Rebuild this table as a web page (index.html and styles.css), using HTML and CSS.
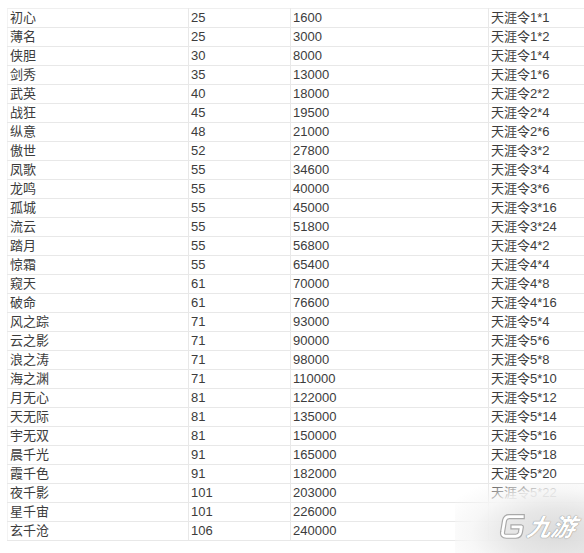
FILE: index.html
```html
<!DOCTYPE html>
<html>
<head>
<meta charset="utf-8">
<link rel="stylesheet" href="styles.css">
</head>
<body>
<div class="page">
<table class="grid">
<colgroup><col class="c1"><col class="c2"><col class="c3"><col class="c4"></colgroup>
<tbody>
<tr><td>初心</td><td>25</td><td>1600</td><td>天涯令1*1</td></tr>
<tr><td>薄名</td><td>25</td><td>3000</td><td>天涯令1*2</td></tr>
<tr><td>侠胆</td><td>30</td><td>8000</td><td>天涯令1*4</td></tr>
<tr><td>剑秀</td><td>35</td><td>13000</td><td>天涯令1*6</td></tr>
<tr><td>武英</td><td>40</td><td>18000</td><td>天涯令2*2</td></tr>
<tr><td>战狂</td><td>45</td><td>19500</td><td>天涯令2*4</td></tr>
<tr><td>纵意</td><td>48</td><td>21000</td><td>天涯令2*6</td></tr>
<tr><td>傲世</td><td>52</td><td>27800</td><td>天涯令3*2</td></tr>
<tr><td>凤歌</td><td>55</td><td>34600</td><td>天涯令3*4</td></tr>
<tr><td>龙鸣</td><td>55</td><td>40000</td><td>天涯令3*6</td></tr>
<tr><td>孤城</td><td>55</td><td>45000</td><td>天涯令3*16</td></tr>
<tr><td>流云</td><td>55</td><td>51800</td><td>天涯令3*24</td></tr>
<tr><td>踏月</td><td>55</td><td>56800</td><td>天涯令4*2</td></tr>
<tr><td>惊霜</td><td>55</td><td>65400</td><td>天涯令4*4</td></tr>
<tr><td>窥天</td><td>61</td><td>70000</td><td>天涯令4*8</td></tr>
<tr><td>破命</td><td>61</td><td>76600</td><td>天涯令4*16</td></tr>
<tr><td>风之踪</td><td>71</td><td>93000</td><td>天涯令5*4</td></tr>
<tr><td>云之影</td><td>71</td><td>90000</td><td>天涯令5*6</td></tr>
<tr><td>浪之涛</td><td>71</td><td>98000</td><td>天涯令5*8</td></tr>
<tr><td>海之渊</td><td>71</td><td>110000</td><td>天涯令5*10</td></tr>
<tr><td>月无心</td><td>81</td><td>122000</td><td>天涯令5*12</td></tr>
<tr><td>天无际</td><td>81</td><td>135000</td><td>天涯令5*14</td></tr>
<tr><td>宇无双</td><td>81</td><td>150000</td><td>天涯令5*16</td></tr>
<tr><td>晨千光</td><td>91</td><td>165000</td><td>天涯令5*18</td></tr>
<tr><td>霞千色</td><td>91</td><td>182000</td><td>天涯令5*20</td></tr>
<tr><td>夜千影</td><td>101</td><td>203000</td><td>天涯令5*22</td></tr>
<tr><td>星千宙</td><td>101</td><td>226000</td><td></td></tr>
<tr><td>玄千沧</td><td>106</td><td>240000</td><td></td></tr>
</tbody>
</table>
<div class="watermark">
  <svg class="wm-logo" width="28" height="30" viewBox="0 0 30 30">
    <path d="M26 5 L12 5 Q8 5 7 9 L5 21 Q4 26 9 26 L19 26 Q23 26 24 22 L25 16 L16 16" fill="none" stroke="#a9a9a9" stroke-width="5.5" stroke-linejoin="round" stroke-linecap="square"/>
    <path d="M26 5 L12 5 Q8 5 7 9 L5 21 Q4 26 9 26 L19 26 Q23 26 24 22 L25 16 L16 16" fill="none" stroke="#ffffff" stroke-width="3" stroke-linejoin="round" stroke-linecap="square"/>
  </svg>
  <span class="wm-text">九游</span>
</div>
</div>
</body>
</html>
```

FILE: styles.css
```css
html, body {
  margin: 0;
  padding: 0;
  background: #ffffff;
}
.page {
  position: relative;
  width: 584px;
  height: 553px;
  overflow: hidden;
  padding: 8px 0 0 7px;
  box-sizing: border-box;
}
.grid {
  border-collapse: collapse;
  table-layout: fixed;
  width: 600px;
  font-family: "Liberation Sans", "Noto Sans CJK SC", sans-serif;
  font-size: 13px;
  color: #3c3c3c;
}
.c1 { width: 181px; }
.c2 { width: 102px; }
.c3 { width: 198px; }
.c4 { width: 119px; }
.grid td {
  height: 18px;
  padding: 0 0 0 2px;
  border: 1px solid #e8e8e8;
  line-height: 18px;
  white-space: nowrap;
  overflow: hidden;
  vertical-align: middle;
}
.grid tr:first-child td { border-top-color: #efefef; }
.grid td:first-child { border-left-color: #f3f3f3; }
.watermark {
  position: absolute;
  left: 455px;
  top: 484px;
  width: 129px;
  height: 69px;
  display: flex;
  align-items: center;
  justify-content: flex-end;
  gap: 2px;
  padding-right: 8px;
  box-sizing: border-box;
  background:
    radial-gradient(ellipse 125px 62px at 80% 72%, rgba(218,218,218,0.97) 0%, rgba(230,230,230,0.95) 40%, rgba(246,246,246,0.9) 70%, rgba(255,255,255,0) 100%);
}
.wm-logo {
  flex: none;
  margin-top: 14px;
}
.wm-text {
  font-family: "Noto Sans CJK SC", sans-serif;
  font-size: 24px;
  line-height: 30px;
  font-weight: 700;
  font-style: italic;
  color: #ffffff;
  letter-spacing: 0;
  margin-top: 14px;
  text-shadow: 0 0 1px #8f8f8f, 0 0 1px #8f8f8f;
  transform: skewX(-12deg);
}
```
